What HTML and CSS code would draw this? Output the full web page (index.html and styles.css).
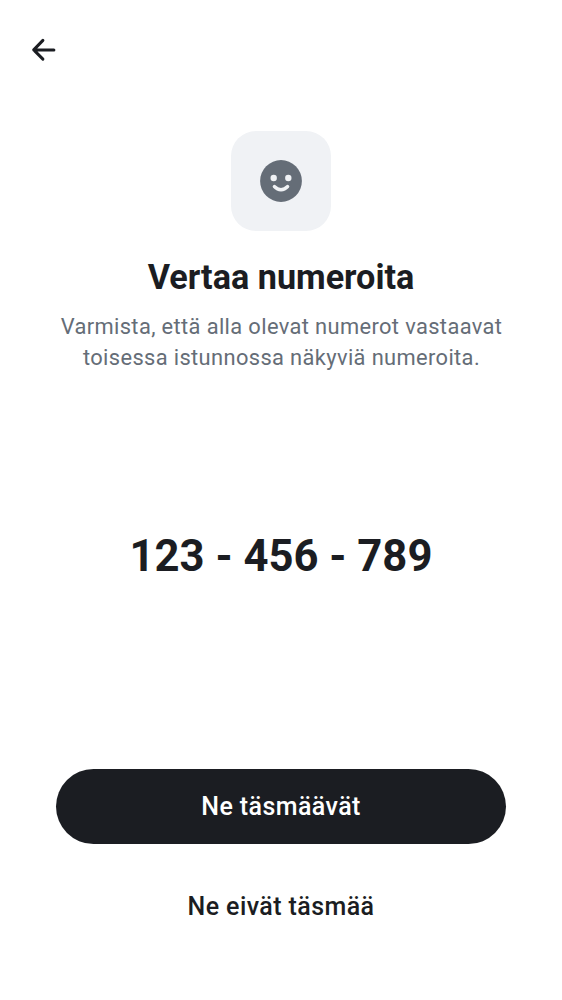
FILE: index.html
```html
<!DOCTYPE html>
<html lang="fi">
<head>
<meta charset="utf-8">
<title>Vertaa numeroita</title>
<link rel="stylesheet" href="styles.css">
</head>
<body>
<div class="screen">
  <header class="top-bar">
    <button class="back" aria-label="Takaisin">
      <svg class="back-icon" viewBox="0 0 32 32"><path d="M14.9 6.4 5.7 15.9 14.9 25.1M6 15.9H25.9"/></svg>
    </button>
  </header>
  <main class="intro">
    <div class="tile">
      <svg class="face" viewBox="0 0 42 42"><circle class="face-head" cx="21" cy="21" r="20.9"/><circle class="face-eye" cx="13.7" cy="18" r="3.2"/><circle class="face-eye" cx="28.3" cy="18" r="3.2"/><path class="face-mouth" d="M14.5 26.6C18.2 30.7 23.8 30.7 27.5 26.6"/></svg>
    </div>
    <h1 class="title">Vertaa numeroita</h1>
    <p class="subtitle">Varmista, että alla olevat numerot vastaavat<br>toisessa istunnossa näkyviä numeroita.</p>
  </main>
  <div class="numbers">123 - 456 - 789</div>
  <footer class="actions">
    <button class="button primary">Ne täsmäävät</button>
    <button class="button">Ne eivät täsmää</button>
  </footer>
</div>
</body>
</html>
```
FILE: styles.css
```css
* { box-sizing: border-box; }
body { margin: 0; background: #fff; color: #1b1d22; font-family: Roboto, sans-serif; }
.screen { height: 1000px; display: flex; flex-direction: column; }
.top-bar { height: 100px; padding: 34px 28px; }
.back { display: block; border: 0; padding: 0; background: none; }
.back-icon { display: block; width: 32px; height: 32px; fill: none; stroke: #1b1d22; stroke-width: 3; stroke-linecap: round; stroke-linejoin: round; }
.intro { display: flex; flex-direction: column; align-items: center; padding-top: 31px; }
.tile { width: 100px; height: 100px; border-radius: 25px; background: #f0f2f5; display: grid; place-items: center; }
.face { width: 42px; height: 42px; }
.face-head { fill: #656d77; }
.face-eye { fill: #f0f2f5; }
.face-mouth { fill: none; stroke: #f0f2f5; stroke-width: 3.6; stroke-linecap: round; }
.title { margin: 24px 0 0; font-size: 34.2px; line-height: 44px; font-weight: 700; white-space: nowrap; }
.subtitle { margin: 12px 0 0; padding-left: 1px; font-size: 21.875px; line-height: 31px; letter-spacing: .37px; color: #656d77; text-align: center; white-space: nowrap; }
.numbers { flex: 1; display: flex; align-items: center; justify-content: center; padding-bottom: 29px; font-size: 43.6px; font-weight: 700; white-space: nowrap; }
.actions { padding: 0 56px 56px; display: grid; gap: 25px; }
.button { height: 75px; border: 0; border-radius: 38px; background: none; color: #1b1d22; font: 500 25px/75px Roboto, sans-serif; letter-spacing: .41px; padding: 0; }
.primary { background: #1b1d22; color: #fff; }
```
